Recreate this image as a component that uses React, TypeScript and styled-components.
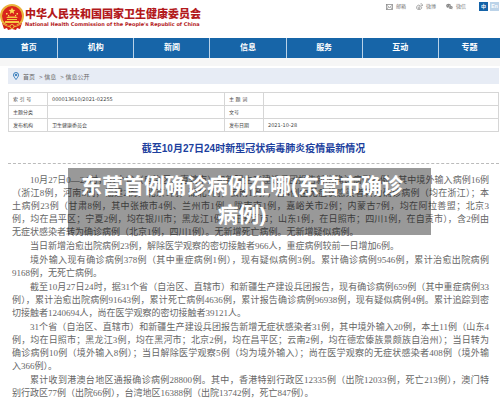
import React from "react";
import styled, { createGlobalStyle } from "styled-components";

const sans = '"Liberation Sans", "Noto Sans CJK SC", sans-serif';

const GlobalStyle = createGlobalStyle`
  * { box-sizing: border-box; }
  body { margin: 0; background: #fff; font-family: ${sans}; overflow-x: hidden; }
`;

const Page = styled.div`
  overflow: hidden;
`;

const Header = styled.header`
  display: flex;
  justify-content: space-between;
  align-items: flex-start;
  height: 38px;
  padding: 2px 0 0;
`;

const Brand = styled.a`
  display: flex;
  gap: 1px;
  padding-top: 2px;
  color: #b3191c;
  text-decoration: none;
  white-space: nowrap;
`;

const BrandText = styled.span`
  display: flex;
  flex-direction: column;
  padding-top: 2px;
`;

const BrandName = styled.strong`
  font: 900 11px/14px "Noto Sans CJK SC", sans-serif;
`;

const BrandEnglish = styled.span`
  font: bold 5px/9px "DejaVu Sans", sans-serif;
`;

const Tools = styled.div`
  display: flex;
  align-items: center;
  gap: 10px;
  height: 9px;
`;

const ToolLink = styled.a`
  display: flex;
  align-items: center;
  gap: 3px;
  color: #777;
  font-size: 5px;
  line-height: 9px;
  text-decoration: none;
`;

const Languages = styled.div`
  display: flex;
  gap: 2px;
  padding: 0 1px 0 3px;
`;

const LanguageButton = styled.button<{ $active?: boolean }>`
  width: 9px;
  height: 9px;
  padding: 0;
  border: 0;
  background: ${(p) => (p.$active ? "#1463a8" : "#bcd3e8")};
  color: #fff;
  font: bold 5px/9px ${sans};
`;

const Nav = styled.nav`
  display: flex;
  height: 20px;
  background: #1765a8;
`;

const NavLink = styled.a<{ $grow: number }>`
  flex: ${(p) => p.$grow} 1 0;
  border-right: 1px solid #b9d2e8;
  color: #fff;
  font-size: 8px;
  font-weight: bold;
  line-height: 20px;
  text-align: center;
  text-decoration: none;
  &:last-child { border-right: 0; }
`;

const Strip = styled.div`
  height: 8px;
  background: #f6f6f6;
`;

const Main = styled.main`
  padding: 2px 1px 0 8px;
`;

const Breadcrumb = styled.nav`
  display: flex;
  align-items: center;
  gap: 4px;
  height: 16px;
  padding-left: 5px;
  background: #e7ecf5;
  color: #666;
  font-size: 6px;
  a { color: inherit; text-decoration: none; }
`;

const MetaTable = styled.table`
  width: 100%;
  margin-top: 8px;
  border-collapse: collapse;
  table-layout: fixed;
  color: #444;
  font: 5px/12px "DejaVu Sans", "Noto Sans CJK SC", sans-serif;
  th, td {
    height: 13px;
    padding: 0 0 0 4px;
    border: 1px solid #d6d6d6;
    font-weight: normal;
    text-align: left;
  }
  th { width: 39px; }
  td:nth-child(2) { width: 177px; }
`;

const Title = styled.h1`
  margin: 0;
  padding: 9px 0 6px;
  border-bottom: 1px dashed #bbb;
  color: #1d3f9e;
  font-size: 10px;
  line-height: 16px;
  text-align: center;
`;

const Article = styled.article`
  position: relative;
  display: flex;
  flex-direction: column;
  gap: 1px;
  padding: 10px 10px 4px 4px;
  color: #666;
  font: 9px/13px "Liberation Serif", "Noto Sans CJK SC", serif;
`;

const Paragraph = styled.p`
  margin: 0;
  text-indent: 18px;
`;

const Line = styled.span<{ $last: boolean }>`
  display: block;
  white-space: nowrap;
  text-align: ${(p) => (p.$last ? "left" : "justify")};
  text-align-last: ${(p) => (p.$last ? "left" : "justify")};
  & + & { text-indent: 0; }
`;

const Banner = styled.div`
  position: absolute;
  top: 4px;
  left: 60px;
  right: 68px;
  padding: 3px 20px 6px 5px;
  background: rgba(0, 0, 0, 0.4);
  color: #fff;
  font: bold 21px/29px ${sans};
  text-align: center;
`;

const Emblem = () => (
  <svg width="24" height="28" viewBox="0 0 24 28" aria-hidden="true">
    <circle cx="12" cy="12" r="11" fill="#d9241c" stroke="#eab33c" strokeWidth="2" />
    <path d="M2 19 Q12 25 22 19 L20 25 L17 24 L16 26 L12 25 L8 26 L7 24 L4 25Z" fill="#d42018" />
    <path d="M3 20 Q12 26 21 20" fill="none" stroke="#eab33c" />
    <path d="M12 3.5l1 2.2 2.4.2-1.8 1.6.6 2.4-2.2-1.3-2.2 1.3.6-2.4-1.8-1.6 2.4-.2z" fill="#fbdc55" />
    <path d="M6 9h1.5v1.5H6zM8 11h1.2v1.2H8zM15 11h1.2v1.2H15zM16.500 9h1.500v1.500h-1.500z" fill="#fbdc55" />
    <path d="M6 14l2-1.500h8l2 1.500zM7 15h10v1H7zM5 17h14v2H5z" fill="#f6c844" />
    <circle cx="12" cy="22.500" r="2" fill="#d42018" stroke="#f2be40" />
  </svg>
);

const MailIcon = () => (
  <svg width="7" height="6" viewBox="0 0 14 12" fill="none" stroke="#888" strokeWidth="1.500" aria-hidden="true">
    <rect x="1" y="1" width="12" height="10" />
    <path d="M1 2l6 5 6-5M1 11l4-5M13 11L9 6" />
  </svg>
);

const WeiboIcon = () => (
  <svg width="7" height="7" viewBox="0 0 14 14" fill="none" stroke="#888" strokeWidth="1.400" aria-hidden="true">
    <path d="M6 4C3 4 1 7 1 9.500 1 12 3.500 13 6 13c3 0 5.500-1.500 5.500-3.500 0-1.200-1-1.800-1.800-2 .3-1.500-.7-2-2.700-1.200C7.300 5 7 4 6 4z" />
    <circle cx="6" cy="9.700" r="1.800" />
    <path d="M9 1.500c3-.5 4.500 1.500 4 4.500M9.500 4c1.200 0 1.700.7 1.500 1.800" />
  </svg>
);

const WechatIcon = () => (
  <svg width="7" height="7" viewBox="0 0 14 14" aria-hidden="true">
    <path d="M5 1.500C2.300 1.500.3 3.200.3 5.400c0 1.300.7 2.300 1.700 3L1.500 10l2-1c3 .7 6.500-.9 6.500-3.800C10 3 7.700 1.500 5 1.500z" fill="#888" />
    <path d="M9.500 5.500c2.400 0 4.200 1.500 4.200 3.400 0 1.200-.6 2-1.500 2.700l.4 1.400-1.700-.9c-2.800.6-5.500-.9-5.500-3.200 0-1.900 1.800-3.400 4.100-3.400z" fill="#888" stroke="#fff" strokeWidth=".7" />
    <path d="M3 4h1v1H3zM6 4h1v1H6zM7.500 8h1v1h-1zM10.500 8h1v1h-1z" fill="#fff" />
  </svg>
);

const PinIcon = () => (
  <svg width="6" height="8" viewBox="0 0 12 16" fill="none" stroke="#2773b5" strokeWidth="1.800" aria-hidden="true">
    <path d="M6 15C4 12 1 9 1 6a5 5 0 0 1 10 0c0 3-3 6-5 9z" />
    <circle cx="6" cy="6" r="1.500" fill="#2773b5" />
  </svg>
);

const navItems = [
  { label: "首页", grow: 58 },
  { label: "机构", grow: 76 },
  { label: "新闻", grow: 76 },
  { label: "信息", grow: 76 },
  { label: "服务", grow: 76 },
  { label: "互动", grow: 76 },
  { label: "专题", grow: 62 },
];

const metaRows = [
  ["索 引 号", "000013610/2021-02255", "主 题 词", ""],
  ["主题分类", "", "文号", ""],
  ["发布机构", "卫生健康委员会", "发布日期", "2021-10-28"],
];

const paragraphs = [
  [
    "10月27日0—24时，31个省（自治区、直辖市）和新疆生产建设兵团报告新增确诊病例39例。其中境外输入病例16例",
    "（浙江8例，河南3例，福建2例，北京1例，湖北1例，云南1例），含4例由无症状感染者转为确诊病例（均在浙江）；本",
    "土病例23例（甘肃8例，其中张掖市4例、兰州市1例、陇南市1例，嘉峪关市2例；内蒙古7例，均在阿拉善盟；北京3",
    "例，均在昌平区；宁夏2例，均在银川市；黑龙江1例，在黑河市；山东1例，在日照市；四川1例，在自贡市），含2例由",
    "无症状感染者转为确诊病例（北京1例，四川1例）。无新增死亡病例。无新增疑似病例。",
  ],
  ["当日新增治愈出院病例23例，解除医学观察的密切接触者966人，重症病例较前一日增加6例。"],
  [
    "境外输入现有确诊病例378例（其中重症病例1例），现有疑似病例3例。累计确诊病例9546例，累计治愈出院病例",
    "9168例，无死亡病例。",
  ],
  [
    "截至10月27日24时，据31个省（自治区、直辖市）和新疆生产建设兵团报告，现有确诊病例659例（其中重症病例33",
    "例），累计治愈出院病例91643例，累计死亡病例4636例，累计报告确诊病例96938例，现有疑似病例4例。累计追踪到密",
    "切接触者1240694人，尚在医学观察的密切接触者39121人。",
  ],
  [
    "31个省（自治区、直辖市）和新疆生产建设兵团报告新增无症状感染者31例，其中境外输入20例，本土11例（山东4",
    "例，均在日照市；黑龙江3例，均在黑河市；北京2例，均在昌平区；云南2例，均在德宏傣族景颇族自治州）；当日转为",
    "确诊病例10例（境外输入8例）；当日解除医学观察5例（均为境外输入）；尚在医学观察的无症状感染者408例（境外输",
    "入366例）。",
  ],
  [
    "累计收到港澳台地区通报确诊病例28800例。其中，香港特别行政区12335例（出院12033例，死亡213例），澳门特",
    "别行政区77例（出院66例），台湾地区16388例（出院13742例，死亡847例）。",
  ],
];

export default function App() {
  return (
    <Page lang="zh-CN">
      <GlobalStyle />
      <Header>
        <Brand href="#">
          <Emblem />
          <BrandText>
            <BrandName>中华人民共和国国家卫生健康委员会</BrandName>
            <BrandEnglish>National Health Commission of the People's Republic of China</BrandEnglish>
          </BrandText>
        </Brand>
        <Tools>
          <ToolLink href="#"><MailIcon />邮箱</ToolLink>
          <ToolLink href="#"><WeiboIcon />微博</ToolLink>
          <ToolLink href="#"><WechatIcon />微信</ToolLink>
          <Languages>
            <LanguageButton $active>中</LanguageButton>
            <LanguageButton>En</LanguageButton>
          </Languages>
        </Tools>
      </Header>
      <Nav>
        {navItems.map((item) => (
          <NavLink key={item.label} href="#" $grow={item.grow}>{item.label}</NavLink>
        ))}
      </Nav>
      <Strip />
      <Main>
        <Breadcrumb>
          <PinIcon />
          <a href="#">首页</a>
          <span>&gt; <a href="#">信息</a></span>
          <span>&gt; <a href="#">信息公开</a></span>
        </Breadcrumb>
        <MetaTable>
          <tbody>
            {metaRows.map(([nameA, valueA, nameB, valueB]) => (
              <tr key={nameA}>
                <th scope="row">{nameA}</th>
                <td>{valueA}</td>
                <th scope="row">{nameB}</th>
                <td>{valueB}</td>
              </tr>
            ))}
          </tbody>
        </MetaTable>
        <Title>截至10月27日24时新型冠状病毒肺炎疫情最新情况</Title>
        <Article>
          {paragraphs.map((lines) => (
            <Paragraph key={lines[0]}>
              {lines.map((line, i) => (
                <Line key={line} $last={i === lines.length - 1}>{line}</Line>
              ))}
            </Paragraph>
          ))}
          <Banner>东营首例确诊病例在哪(东营市确诊病例)</Banner>
        </Article>
      </Main>
    </Page>
  );
}
